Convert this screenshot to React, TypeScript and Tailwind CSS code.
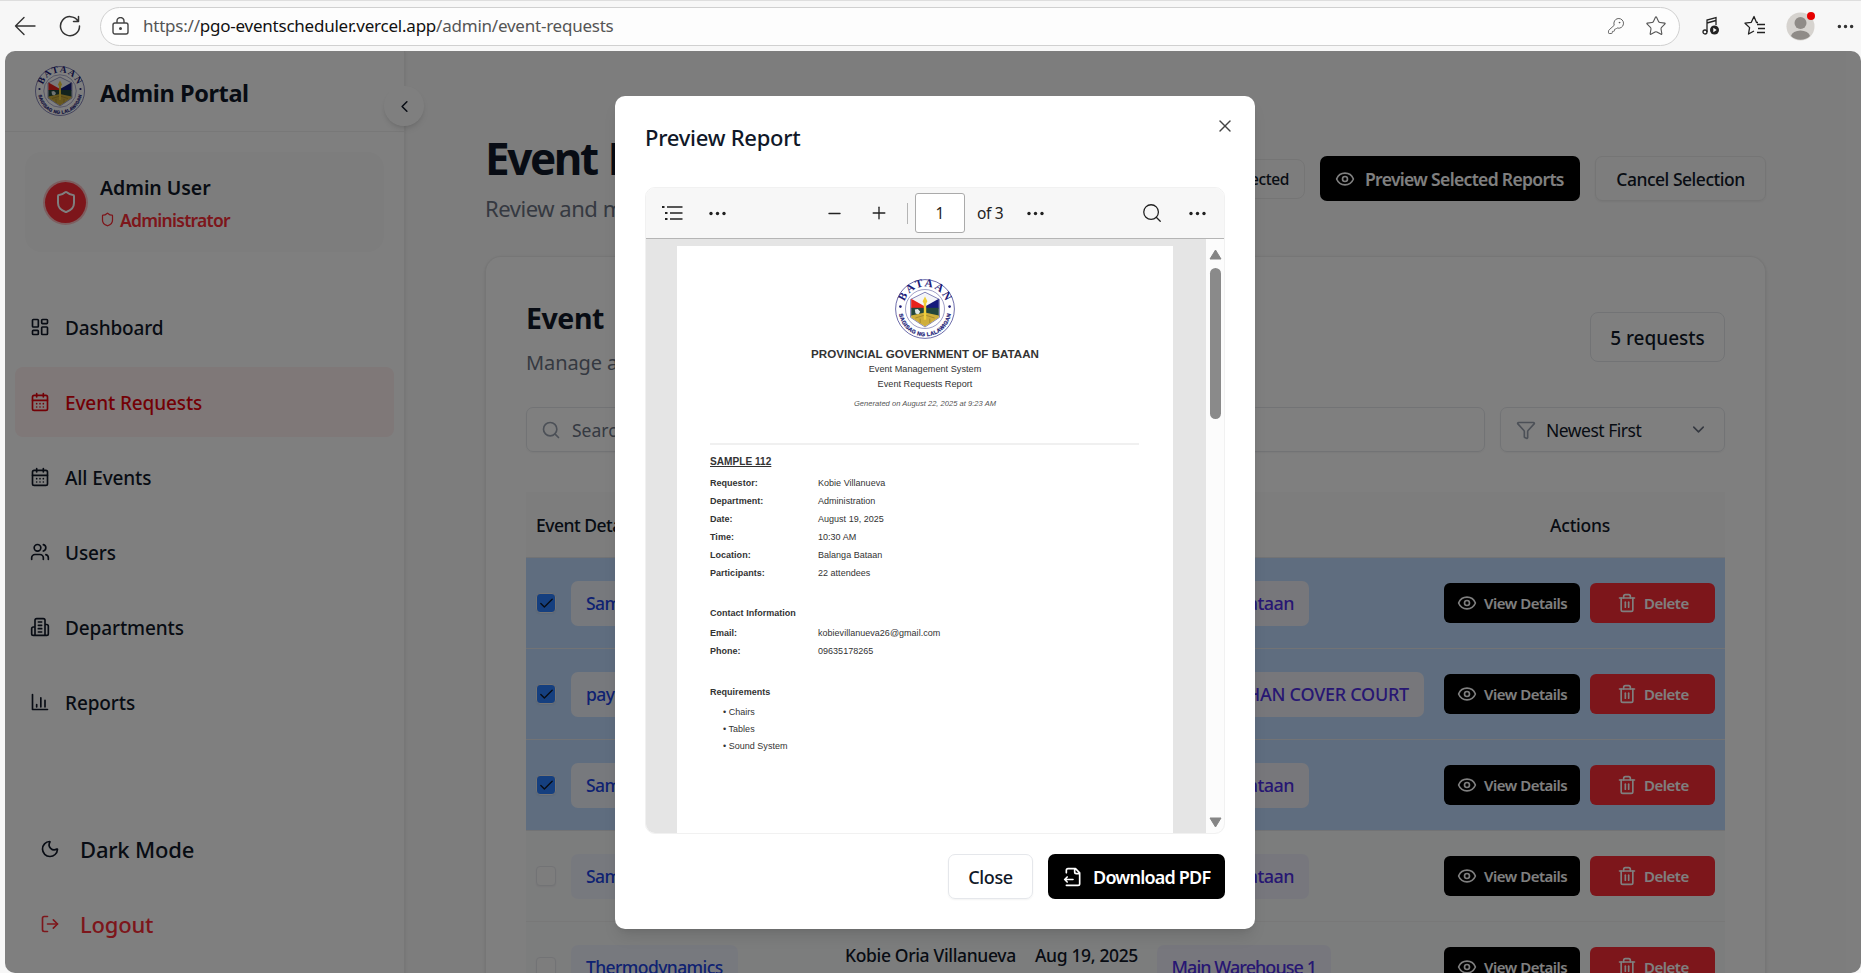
import React from 'react';
import {
  ChevronLeft, Shield, LayoutDashboard, CalendarDays, Users, Moon, LogOut,
  Eye, Search, Funnel, ChevronDown, Check, Trash2, X, Plus, Minus, Star, KeyRound, Ellipsis,
} from 'lucide-react';

function Seal({ size }: { size: number }) {
  return (
    <svg width={size} height={size} viewBox="0 0 100 100" className="shrink-0">
      <defs>
        <path id="arcTop" d="M 15 54 A 35.5 35.5 0 1 1 85 54" />
        <path id="arcBottom" d="M 6.5 52 A 43.5 43.5 0 0 0 93.5 52" />
      </defs>
      <circle cx="50" cy="50" r="49" fill="#fff" stroke="#34348a" strokeWidth="1.2" />
      <circle cx="50" cy="50" r="32.500" fill="#fff" stroke="#34348a" strokeWidth="0.8" />
      <path d="M50 22 L74 34 V64 L50 80 L26 64 V34 Z" fill="#f4f4f8" stroke="#34348a" strokeWidth="1" />
      <path d="M27 33 L50 46 V49 H27 Z" fill="#e8221c" />
      <path d="M73 33 L50 46 V49 H73 Z" fill="#151a7c" />
      <rect x="27" y="48" width="46" height="14" fill="#23463c" />
      <path d="M33 51 l5 -1 4 4 -3 6 -5 -3 z" fill="#dfe8e8" />
      <path d="M27 61 L50 56 L73 61 V64 L50 79 L27 64Z" fill="#cfae3c" />
      <path d="M34 65 L50 60 L66 65 M42 74 V66 M58 74 V66" fill="none" stroke="#8c7424" strokeWidth="1" />
      <path d="M50 29 L54 37 L52 41 V68 H48 V41 L46 37 Z" fill="#f0cf3a" />
      <text fontFamily="Liberation Serif, serif" fontWeight="700" fontSize="19" fill="#1d1d78">
        <textPath href="#arcTop" startOffset="50%" textAnchor="middle" textLength="90">BATAAN</textPath>
      </text>
      <text fontFamily="Liberation Sans, sans-serif" fontWeight="700" fontSize="9" fill="#1d1d78" stroke="#1d1d78" strokeWidth="0.4">
        <textPath href="#arcBottom" startOffset="50%" textAnchor="middle" textLength="124">SAGISAG NG LALAWIGAN</textPath>
      </text>
      <circle cx="9" cy="46" r="2.2" fill="#1d1d78" />
      <circle cx="91" cy="46" r="2.2" fill="#1d1d78" />
    </svg>
  );
}

function BrowserBar() {
  return (
    <div className="flex h-[51px] shrink-0 items-center border-t border-[#dedede] bg-[#f7f7f7] pl-[14px] text-[#333]">
      <svg width="22" height="22" viewBox="0 0 22 22" fill="none" stroke="#333" strokeWidth="1.4" strokeLinecap="round" strokeLinejoin="round">
        <path d="M21 11H1.500M10 2.500 1.500 11 10 19.500" />
      </svg>
      <svg width="22" height="22" viewBox="0 0 22 22" className="ml-[23px]" fill="none" stroke="#333" strokeWidth="1.500" strokeLinecap="round" strokeLinejoin="round">
        <path d="M19 6A9.500 9.500 0 1 0 20.500 11M19.500 1.500V6.500H14.500" />
      </svg>
      <div className="ml-[19px] flex h-[39px] w-[1580px] items-center rounded-full border border-[#d0d0d0] bg-[#fdfdfd] pr-[12px] pl-[11px]">
        <svg width="17" height="18" viewBox="0 0 17 18" fill="none" stroke="#444" strokeWidth="1.4">
          <rect x="1" y="6" width="15" height="11" rx="2" />
          <path d="M5 6V4a3.5 3.5 0 0 1 7 0v2" />
          <circle cx="8.5" cy="11.5" r="0.8" fill="#444" />
        </svg>
        <span className="ml-[14px] flex-1 text-[17px] tracking-[-0.23px] whitespace-nowrap text-[#555]">
          https://<span className="text-[#111]">pgo-eventscheduler.vercel.app</span>/admin/event-requests
        </span>
        <KeyRound size={18} strokeWidth={1.2} className="text-[#555]" />
        <Star size={22} strokeWidth={1.2} className="ml-[20px] text-[#555]" />
      </div>
      <svg width="18" height="20" viewBox="0 0 18 20" className="ml-[22px]" fill="none" stroke="#222" strokeWidth="1.3">
        <path d="M5 16V4l9-2.5V9M5 7l9-2.5" />
        <circle cx="3" cy="16" r="2" />
        <circle cx="12.5" cy="14" r="4.5" fill="#222" stroke="none" />
        <path d="M11.3 11.8v4.4l3.4-2.2z" fill="#fff" stroke="none" />
      </svg>
      <svg width="22" height="22" viewBox="0 0 22 22" className="ml-[24px]" fill="none" stroke="#222" strokeWidth="1.3" strokeLinejoin="round">
        <path d="M14 7.5 12.5 7.5 10 1.5 7.3 7.3 1 8.2 5.6 12.6 4.5 19 10 16M13 9.5h8M14 13.5h7M13 17.5h8" />
      </svg>
      <div className="relative ml-[20px] size-[29px]">
        <svg width="29" height="29" viewBox="0 0 29 29">
          <circle cx="14.5" cy="14.5" r="14" fill="#d6d3cf" />
          <circle cx="14.5" cy="11" r="6" fill="#8f8b87" />
          <path d="M5 24a9.6 6.5 0 0 1 19 0a14 14 0 0 1 -19 0z" fill="#8f8b87" />
        </svg>
        <span className="absolute top-0 right-0 size-[8px] rounded-full bg-[#e60000]" />
      </div>
      <Ellipsis size={21} strokeWidth={2} className="ml-[20px]" />
    </div>
  );
}

const ReportsIcon = () => (
  <svg width="20" height="20" viewBox="0 0 24 24" fill="none" stroke="currentColor" strokeWidth="2" strokeLinecap="round" strokeLinejoin="round">
    <path d="M3 3v18h18M8 18v-3M13 18V7M18 18v-8" />
  </svg>
);
const BuildingIcon = () => (
  <svg width="20" height="20" viewBox="0 0 24 24" fill="none" stroke="currentColor" strokeWidth="2" strokeLinecap="round" strokeLinejoin="round">
    <path d="M6 22V4a2 2 0 0 1 2-2h8a2 2 0 0 1 2 2v18ZM6 12H4a2 2 0 0 0-2 2v6a2 2 0 0 0 2 2h2M18 9h2a2 2 0 0 1 2 2v9a2 2 0 0 1-2 2h-2M10 6h4M10 10h4M10 14h4M10 18h4" />
  </svg>
);

const nav = [
  { label: 'Dashboard', icon: <LayoutDashboard size={20} />, active: false },
  { label: 'Event Requests', icon: <CalendarDays size={20} />, active: true },
  { label: 'All Events', icon: <CalendarDays size={20} />, active: false },
  { label: 'Users', icon: <Users size={20} />, active: false },
  { label: 'Departments', icon: <BuildingIcon />, active: false },
  { label: 'Reports', icon: <ReportsIcon />, active: false },
];

function Sidebar() {
  return (
    <aside className="relative z-10 flex w-[400px] shrink-0 flex-col border-r border-[#efefef] bg-white shadow-sm">
      <div className="flex h-[81px] shrink-0 items-center border-b border-[#f1f1f1] pl-[30px]">
        <Seal size={50} />
        <span className="ml-[15px] pt-[5px] text-[23.5px] font-bold tracking-[-0.4px]">Admin Portal</span>
      </div>
      <div className="absolute top-[35px] -right-[20px] flex size-[40px] items-center justify-center rounded-full bg-white shadow-md">
        <ChevronLeft size={19} />
      </div>
      <div className="mx-[20px] mt-[20px] flex h-[100px] shrink-0 items-center rounded-[16px] bg-[#fbfbfb] pl-[20px]">
        <div className="flex size-[41px] items-center justify-center rounded-full bg-[#fb2c36] ring-2 ring-[#fb2c36]/30">
          <Shield size={24} className="text-white" />
        </div>
        <div className="ml-[14px] flex flex-col gap-[5px] pt-[2px]">
          <span className="text-[19.5px] leading-[28px] font-semibold tracking-[-0.05px]">Admin User</span>
          <span className="flex items-center text-[17.5px] leading-[26px] font-semibold tracking-[-0.72px] text-[#fb2c36]">
            <Shield size={15} className="mr-[5px]" />
            Administrator
          </span>
        </div>
      </div>
      <nav className="mx-[10px] mt-[40px] flex flex-col gap-[5px]">
        {nav.map((n) => (
          <div
            key={n.label}
            className={
              n.active
                ? 'flex h-[70px] items-center gap-[15px] rounded-[8px] bg-[#fff0f0] pl-[15px] text-[#e7000b]'
                : 'flex h-[70px] items-center gap-[15px] pl-[15px]'
            }
          >
            {n.icon}
            <span className="pt-[2px] text-[19px] font-medium tracking-[-0.12px]">{n.label}</span>
          </div>
        ))}
      </nav>
      <div className="mt-auto mb-[14px] flex flex-col gap-[5px] pl-[35px] text-[22px] font-medium tracking-[-0.2px]">
        <div className="flex h-[70px] items-center gap-[20px]">
          <Moon size={20} />
          <span className="pt-[1px]">Dark Mode</span>
        </div>
        <div className="flex h-[70px] items-center gap-[20px] text-[#fb2c36]">
          <LogOut size={20} />
          <span className="pt-[1px]">Logout</span>
        </div>
      </div>
    </aside>
  );
}

const rows = [
  { name: 'Sample 112', by: 'Kobie Villanueva', date: 'Aug 19, 2025', loc: 'Balanga Bataan', locCls: 'w-[152px] tracking-[-0.55px]', sel: true },
  { name: 'payout', by: 'Kobie Villanueva', date: 'Aug 19, 2025', loc: 'BARANGAYHAN COVER COURT', locCls: 'w-[267px] tracking-[-0.25px]', sel: true },
  { name: 'Sample 2', by: 'Kobie Villanueva', date: 'Aug 19, 2025', loc: 'Balanga Bataan', locCls: 'w-[152px] tracking-[-0.55px]', sel: true },
  { name: 'Sample 1', by: 'Kobie Villanueva', date: 'Aug 19, 2025', loc: 'Balanga Bataan', locCls: 'w-[152px] tracking-[-0.55px]', sel: false },
  { name: 'Thermodynamics', by: 'Kobie Oria Villanueva', date: 'Aug 19, 2025', loc: 'Main Warehouse 1', locCls: 'w-[174px] tracking-[-0.95px]', sel: false },
];

function Row({ r }: { r: (typeof rows)[number] }) {
  return (
    <div className={r.sel ? 'flex h-[91px] shrink-0 items-center border-b border-gray-200 bg-[#bedbff] pl-[10px]' : 'flex h-[91px] shrink-0 items-center border-b border-[#f0f0f0] bg-[#f9fafb] pl-[10px]'}>
      <div className={r.sel ? 'flex size-[20px] items-center justify-center rounded-[4px] border border-gray-200 bg-[#2b7fff] shadow-xs' : 'size-[20px] rounded-[4px] border border-gray-200 bg-[#fafafa] shadow-xs'}>
        {r.sel && <Check size={17} strokeWidth={2} />}
      </div>
      <div className="ml-[15px] flex w-[273px]">
        <span className={r.sel ? 'flex h-[45px] items-center rounded-[7px] bg-[#eff2fa] px-[15px] text-[17.5px] font-medium tracking-[-0.6px] text-[#1d44e4]' : 'flex h-[45px] items-center rounded-[7px] bg-[#eff3fd] px-[15px] text-[17.5px] font-medium tracking-[-0.6px] text-[#1d44e4]'}>
          {r.name}
        </span>
      </div>
      <span className="mt-[-23px] w-[190px] pl-px text-[17.5px] font-medium tracking-[-0.35px] whitespace-nowrap">{r.by}</span>
      <span className="mt-[-23px] w-[123px] pl-px text-[17.5px] font-medium tracking-[-0.35px] whitespace-nowrap">{r.date}</span>
      <div className={r.sel ? 'flex rounded-[7px] bg-[#efeff6]' : 'flex rounded-[7px] bg-[#eeeffa]'}>
        <div className={r.locCls + ' flex h-[45px] items-center justify-end overflow-hidden pr-[15px] text-[18px] font-medium whitespace-nowrap text-[#4f2fe6]'}>
          {r.loc}
        </div>
      </div>
      <div className="mr-[10px] ml-auto flex gap-[10px] text-[15px] font-semibold tracking-[-0.48px] text-white">
        <div className="flex h-[40px] w-[136px] items-center rounded-[6px] bg-black pl-[13px] whitespace-nowrap">
          <Eye size={20} className="mr-[7px]" />
          <span className="pt-px">View Details</span>
        </div>
        <div className="flex h-[40px] w-[125px] items-center rounded-[6px] bg-[#fb2c36] pl-[27px]">
          <Trash2 size={20} className="mr-[7px]" />
          <span className="pt-px">Delete</span>
        </div>
      </div>
    </div>
  );
}

function Main() {
  return (
    <main className="flex w-[1441px] shrink-0 flex-col bg-[#fafafa] pl-[80px]">
      <div className="mt-[77px] flex h-[128px] w-[1281px] shrink-0 justify-between">
        <div className="whitespace-nowrap">
          <h1 className="text-[44px] leading-[60px] font-bold tracking-[-2.4px] [word-spacing:2px]">Event Requests</h1>
          <p className="mt-[4px] text-[22px] leading-[32px] tracking-[-0.45px] text-gray-500">Review and manage event requests</p>
        </div>
        <div className="mt-[28px] flex h-[45px] items-center gap-[15px] font-medium">
          <div className="flex h-[40px] items-center rounded-[8px] border border-[#eaeaea] px-[15px] pt-[2px] text-[15.5px] tracking-[-0.4px]">3 selected</div>
          <div className="flex h-[45px] w-[260px] items-center rounded-[7px] bg-black pl-[15px] text-[17.5px] font-semibold tracking-[-0.66px] whitespace-nowrap text-white">
            <Eye size={20} className="mr-[10px]" />
            <span className="pt-[2px]">Preview Selected Reports</span>
          </div>
          <div className="flex h-[45px] w-[171px] items-center justify-center rounded-[7px] border border-[#eaeaea] pt-[2px] text-[17.5px] tracking-[-0.48px] whitespace-nowrap shadow-xs">Cancel Selection</div>
        </div>
      </div>
      <section className="flex w-[1281px] flex-1 flex-col rounded-t-[16px] border border-b-0 border-[#ededed] bg-white px-[40px] shadow-sm">
        <div className="mt-[40px] flex h-[110px] shrink-0 justify-between">
          <div className="whitespace-nowrap">
            <h2 className="text-[28.5px] leading-[43px] font-bold tracking-[-0.45px] [word-spacing:4px]">Event Requests List</h2>
            <p className="mt-[7px] text-[20px] leading-[32px] tracking-[-0.1px] text-gray-500">Manage and review all submitted requests</p>
          </div>
          <div className="mt-[15px] flex h-[50px] w-[135px] items-center justify-center rounded-[8px] border border-gray-200 pt-[2px] text-[19px] font-medium">5 requests</div>
        </div>
        <div className="flex h-[45px] shrink-0 gap-[15px] text-[17.5px]">
          <div className="flex flex-1 items-center rounded-[7px] border border-gray-200 pl-[14px] text-gray-500 shadow-xs">
            <Search size={20} className="mr-[11px] text-gray-400" />
            <span className="pt-[2px]">Search by title</span>
          </div>
          <div className="flex w-[225px] items-center rounded-[7px] border border-gray-200 pr-[16px] pl-[15px] tracking-[-0.5px] shadow-xs">
            <Funnel size={20} className="mr-[10px] text-gray-400" />
            <span className="pt-[2px]">Newest First</span>
            <ChevronDown size={19} className="ml-auto text-gray-500" />
          </div>
        </div>
        <div className="mt-[40px] flex h-[66px] shrink-0 items-center justify-between border-b border-gray-200 bg-[#fafafa] pt-[2px] pr-[115px] pl-[10px] text-[17.5px] font-medium tracking-[-0.25px]">
          <span className="tracking-[-0.5px]">Event Details</span>
          <span>Actions</span>
        </div>
        <div className="flex h-[415px] flex-col overflow-hidden">
          {rows.map((r, i) => (
            <Row key={i} r={r} />
          ))}
        </div>
      </section>
    </main>
  );
}

const Field = ({ k, v }: { k: string; v: string }) => (
  <div className="flex h-[18px] items-center">
    <span className="w-[108px] font-bold">{k}</span>
    <span>{v}</span>
  </div>
);

const Dots = () => (
  <svg width="17" height="5" viewBox="0 0 17 5" fill="#222">
    <circle cx="2" cy="2.5" r="1.7" />
    <circle cx="8.5" cy="2.5" r="1.7" />
    <circle cx="15" cy="2.5" r="1.7" />
  </svg>
);

function Modal() {
  return (
    <div className="absolute top-[96px] left-[615px] z-30 flex h-[833px] w-[640px] flex-col rounded-[10px] bg-white px-[30px] shadow-lg">
      <X size={20} strokeWidth={1.7} className="absolute top-[20px] right-[20px] text-[#444]" />
      <h3 className="mt-[25px] text-[22px] leading-[32px] font-medium tracking-[-0.25px]">Preview Report</h3>
      <div className="mt-[34px] flex h-[647px] shrink-0 flex-col overflow-hidden rounded-[10px] border border-[#f1f1f1]">
        <div className="flex h-[51px] shrink-0 items-center border-b border-[#b5b5b5] bg-[#f7f7f7] pl-[15px] text-[#222]">
          <svg width="22" height="18" viewBox="0 0 22 18" fill="none" stroke="#222" strokeWidth="1.5">
            <path d="M6 3h15.500M9 9h12.500M9 15h12.500" />
            <path d="M1 3h2.500M4 9h2.500M4 15h2.500" strokeWidth="2.200" />
          </svg>
          <span className="ml-[26px] flex"><Dots /></span>
          <Minus size={19} strokeWidth={1.6} className="ml-[99px]" />
          <Plus size={20} strokeWidth={1.6} className="ml-[25px]" />
          <span className="ml-[18px] h-[21px] w-px bg-[#b5b5b5]" />
          <span className="ml-[7px] flex h-[40px] w-[50px] items-center justify-center rounded-[3px] border border-[#aaa] bg-white pt-[2px] text-[15.5px]">1</span>
          <span className="ml-[12px] pt-[2px] text-[15.5px] tracking-[-0.3px]">of 3</span>
          <span className="ml-[24px] flex"><Dots /></span>
          <Search size={22} strokeWidth={1.4} className="ml-[97px]" />
          <span className="ml-[26px] flex"><Dots /></span>
        </div>
        <div className="flex flex-1 bg-[#e5e5e5] pl-[31px]">
          <div className="mt-[7px] flex w-[496px] flex-col bg-white pr-[34px] pl-[33px] font-['Liberation_Sans',Arial,sans-serif] text-[9px] tracking-[0.02px] text-[#333]">
            <div className="mt-[33px] flex flex-col items-center pl-px">
              <Seal size={60} />
              <span className="mt-[8px] text-[11.6px] leading-[14px] font-bold whitespace-nowrap">PROVINCIAL GOVERNMENT OF BATAAN</span>
              <span className="mt-px text-[9.15px] leading-[15px]">Event Management System</span>
              <span className="text-[9.15px] leading-[15px]">Event Requests Report</span>
              <span className="mt-[6px] text-[7.55px] leading-[12px] text-[#555] italic">Generated on August 22, 2025 at 9:23 AM</span>
            </div>
            <div className="mt-[33px] h-[2px] bg-[#f0f0f0]" />
            <div className="mt-[11px] mb-[7px] text-[10.1px] leading-[12px] font-bold underline">SAMPLE 112</div>
            <Field k="Requestor:" v="Kobie Villanueva" />
            <Field k="Department:" v="Administration" />
            <Field k="Date:" v="August 19, 2025" />
            <Field k="Time:" v="10:30 AM" />
            <Field k="Location:" v="Balanga Bataan" />
            <Field k="Participants:" v="22 attendees" />
            <div className="mt-[21px] mb-[3px] leading-[18px] font-bold">Contact Information</div>
            <Field k="Email:" v="kobievillanueva26@gmail.com" />
            <Field k="Phone:" v="09635178265" />
            <div className="mt-[22px] mb-[3px] leading-[18px] font-bold">Requirements</div>
            <div className="pl-[13px] leading-[17px]">
              <div>• Chairs</div>
              <div>• Tables</div>
              <div>• Sound System</div>
            </div>
          </div>
          <div className="ml-auto flex w-[18px] flex-col items-center bg-[#fcfcfc] pt-[10px] pb-[5px]">
            <svg width="13" height="11" viewBox="0 0 13 11"><path d="M6.500 1 12 10H1Z" fill="#858585" stroke="#858585" strokeLinejoin="round" /></svg>
            <div className="mt-[8px] h-[151px] w-[11px] rounded-full bg-[#8a8a8a]" />
            <svg width="13" height="11" viewBox="0 0 13 11" className="mt-auto"><path d="M6.500 10 12 1H1Z" fill="#858585" stroke="#858585" strokeLinejoin="round" /></svg>
          </div>
        </div>
      </div>
      <div className="mt-[20px] flex justify-end gap-[15px] text-[18px]">
        <div className="flex h-[45px] w-[85px] items-center justify-center rounded-[7px] border border-gray-200 pt-[2px] font-medium tracking-[-0.35px] shadow-xs">Close</div>
        <div className="flex h-[45px] w-[177px] items-center rounded-[7px] bg-black pl-[15px] font-semibold tracking-[-0.8px] whitespace-nowrap text-white">
          <svg width="20" height="20" viewBox="0 0 24 24" className="mr-[10px]" fill="none" stroke="currentColor" strokeWidth="2" strokeLinecap="round" strokeLinejoin="round">
            <path d="M4 7V4a2 2 0 0 1 2-2h9l5 5v13a2 2 0 0 1-2 2H4M14 2v4a2 2 0 0 0 2 2h4M2 15h10M5 12l-3 3 3 3" />
          </svg>
          <span className="pt-[2px]">Download PDF</span>
        </div>
      </div>
    </div>
  );
}

export default function App() {
  return (
    <div className="relative flex h-[973px] w-[1861px] flex-col overflow-hidden bg-[#f7f7f7] font-['Noto_Sans',sans-serif] text-[#101828]">
      <BrowserBar />
      <div className="relative ml-[5px] flex h-[922px] overflow-hidden rounded-[10px] bg-[#fcfcfc]">
        <Sidebar />
        <Main />
        <div className="absolute inset-0 z-20 bg-black/50" />
      </div>
      <Modal />
    </div>
  );
}
